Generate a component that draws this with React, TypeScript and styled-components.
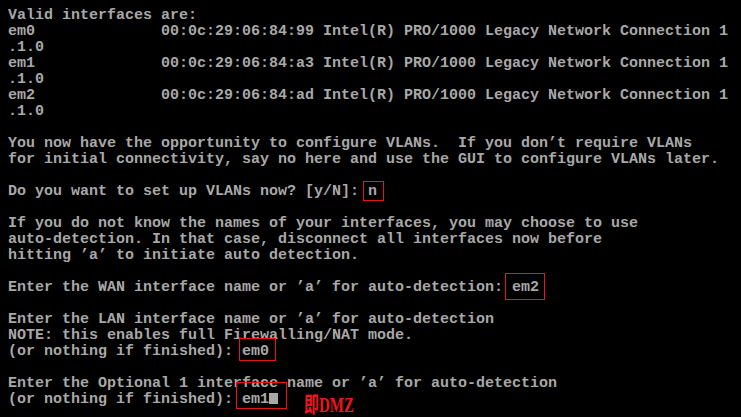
import React from "react";
import styled, { createGlobalStyle } from "styled-components";

const Global = createGlobalStyle`
  html, body {
    margin: 0;
    padding: 0;
    background: #000;
  }
  body {
    width: 741px;
    height: 417px;
    overflow: hidden;
  }
`;

const Screen = styled.div`
  width: 741px;
  height: 417px;
  background: #000;
  box-sizing: border-box;
  padding: 8px 0 0 8px;
  display: flex;
  flex-direction: column;
`;

const Line = styled.div`
  height: 16px;
  line-height: 16px;
  font-family: "Liberation Mono", "DejaVu Sans Mono", monospace;
  font-size: 15px;
  font-weight: bold;
  color: #a8a8a8;
  white-space: pre;
`;

const Answer = styled.span<{ $box: string }>`
  position: relative;
  &::after {
    content: "";
    position: absolute;
    inset: ${(p) => p.$box};
    border: 1px solid #e8141c;
    pointer-events: none;
  }
`;

const Cursor = styled.span`
  display: inline-block;
  width: 9px;
  height: 11px;
  background: #a8a8a8;
  vertical-align: -1px;
`;

const Note = styled.span`
  display: inline-block;
  margin-left: 26px;
  font-family: "Liberation Serif", "Noto Sans CJK SC", serif;
  font-weight: bold;
  font-size: 22px;
  line-height: 16px;
  color: #f0161e;
  transform: scaleX(0.68);
  transform-origin: left center;
  vertical-align: -9px;
`;

const Q = "\u2019";

const lines: React.ReactNode[] = [
  "Valid interfaces are:",
  "em0              00:0c:29:06:84:99 Intel(R) PRO/1000 Legacy Network Connection 1",
  ".1.0",
  "em1              00:0c:29:06:84:a3 Intel(R) PRO/1000 Legacy Network Connection 1",
  ".1.0",
  "em2              00:0c:29:06:84:ad Intel(R) PRO/1000 Legacy Network Connection 1",
  ".1.0",
  "",
  `You now have the opportunity to configure VLANs.  If you don${Q}t require VLANs`,
  "for initial connectivity, say no here and use the GUI to configure VLANs later.",
  "",
  <>
    {"Do you want to set up VLANs now? [y/N]: "}
    <Answer $box="-2px -7px -1px -5px">n</Answer>
  </>,
  "",
  "If you do not know the names of your interfaces, you may choose to use",
  "auto-detection. In that case, disconnect all interfaces now before",
  `hitting ${Q}a${Q} to initiate auto detection.`,
  "",
  <>
    {`Enter the WAN interface name or ${Q}a${Q} for auto-detection: `}
    <Answer $box="-6px -6px -4px -7px">em2</Answer>
  </>,
  "",
  `Enter the LAN interface name or ${Q}a${Q} for auto-detection`,
  "NOTE: this enables full Firewalling/NAT mode.",
  <>
    {"(or nothing if finished): "}
    <Answer $box="-5px -7px -1px -3px">em0</Answer>
  </>,
  "",
  `Enter the Optional 1 interface name or ${Q}a${Q} for auto-detection`,
  <>
    {"(or nothing if finished): "}
    <Answer $box="-9px -9px -1px -6px">
      em1
      <Cursor />
    </Answer>
    <Note>即DMZ</Note>
  </>,
];

export default function App() {
  return (
    <>
      <Global />
      <Screen>
        {lines.map((l, i) => (
          <Line key={i}>{l === "" ? "\u00a0" : l}</Line>
        ))}
      </Screen>
    </>
  );
}
